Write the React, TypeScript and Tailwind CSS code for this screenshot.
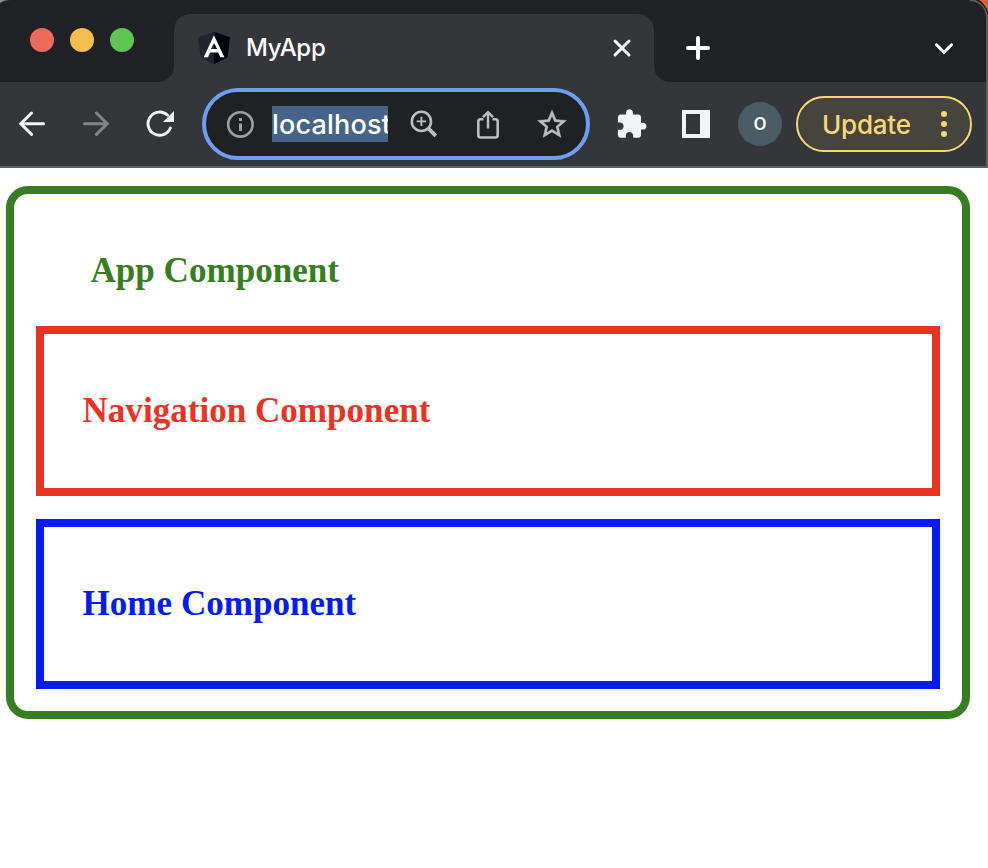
import type { ReactNode } from "react";

function Glyph({ box, className, children }: { box: string; className: string; children: ReactNode }) {
  return (
    <svg viewBox={box} className={`block shrink-0 ${className}`} fill="none">
      {children}
    </svg>
  );
}

function AngularLogo() {
  return (
    <Glyph box="198 31 32 34" className="h-[34px] w-8">
      <path d="M214 31.8 198.2 37.2 200.6 57.5 214 64.3z" fill="#20242f" />
      <path d="M214 31.8 230 37.2 227.6 57.5 214 64.3z" fill="#03060f" />
      <path
        fillRule="evenodd"
        d="M214 35.3 203.7 57.2H208L210.1 52.4H218.2L220.3 57.2H224.4zM214 42.9 217.2 49H210.9z"
        fill="#fff"
      />
    </Glyph>
  );
}

function TabStrip() {
  return (
    <div className="relative flex h-[82px] shrink-0 items-end bg-[#202124]">
      <div className="flex h-[82px] w-[174px] items-start gap-4 pt-7 pl-[30px]">
        <span className="size-6 rounded-full bg-[#ed6a5e]" />
        <span className="size-6 rounded-full bg-[#f5bf4f]" />
        <span className="size-6 rounded-full bg-[#61c554]" />
      </div>
      <div className="relative flex h-[68px] w-[480px] items-center rounded-t-2xl bg-[#35363a] pr-[18px] pl-6">
        <AngularLogo />
        <span className="ml-4 flex-1 font-['Inter','Liberation_Sans',sans-serif] text-[24px] leading-8 font-[450] tracking-[-0.3px] text-white">
          MyApp
        </span>
        <Glyph box="608 34 28 28" className="size-7">
          <path d="M615 41 629 55M629 41 615 55" stroke="#fff" strokeWidth="3" strokeLinecap="round" />
        </Glyph>
        <Glyph box="0 0 16 16" className="absolute bottom-0 -left-4 size-4">
          <path d="M16 0V16H0A16 16 0 0 0 16 0" fill="#35363a" />
        </Glyph>
        <Glyph box="0 0 16 16" className="absolute -right-4 bottom-0 size-4">
          <path d="M0 0V16H16A16 16 0 0 1 0 0" fill="#35363a" />
        </Glyph>
      </div>
      <Glyph box="654 14 88 68" className="h-[68px] w-[88px]">
        <path d="M688 48H708M698 38V58" stroke="#fff" strokeWidth="4" strokeLinecap="round" />
      </Glyph>
      <Glyph box="900 14 88 68" className="ml-auto h-[68px] w-[88px]">
        <path d="M936.5 44.8 944 52.3 951.5 44.8" stroke="#fff" strokeWidth="3" strokeLinecap="round" />
      </Glyph>
      <Glyph box="964 0 24 82" className="absolute top-0 right-0 h-[82px] w-6">
        <path d="M970 0C981 1 987 8 987 19V82" stroke="#5d5e62" strokeWidth="2" />
        <path d="M976 0H988V15C986 8 982 3 976 0" fill="#1b1512" />
        <path d="M979 0H988V11.5C986 6.5 983 3 979 0" fill="#d9622f" />
      </Glyph>
      <Glyph box="0 0 12 4" className="absolute top-0 left-0 h-1 w-3">
        <path d="M0 0H10Q4 0 0 3z" fill="#8c8d90" />
      </Glyph>
    </div>
  );
}

function AddressBar() {
  return (
    <div className="ml-2.5 flex h-[72px] w-[388px] shrink-0 items-center rounded-full border-4 border-[#6f9df1] bg-[#202124]">
      <Glyph box="206 92 66 64" className="h-16 w-[66px]">
        <circle cx="240.4" cy="124.4" r="12.2" stroke="#9aa0a6" strokeWidth="2.6" />
        <path d="M239 118H242V121H239zM239 123.5H242V131H239z" fill="#9aa0a6" />
      </Glyph>
      <div className="h-9 w-[116px] overflow-hidden bg-[#466489] font-['Inter','Liberation_Sans',sans-serif] text-[27px] leading-[38px] font-[450] tracking-[0.2px] whitespace-nowrap text-white">
        localhost
      </div>
      <Glyph box="392 92 64 64" className="ml-1 size-16">
        <circle cx="421.4" cy="121.4" r="9.6" stroke="#bdbdbd" strokeWidth="2.6" />
        <path d="M416.7 121.4H426.1M421.4 116.7V126.1" stroke="#bdbdbd" strokeWidth="1.9" />
        <path d="M428.4 128.4 435.8 135.8" stroke="#bdbdbd" strokeWidth="3.8" />
      </Glyph>
      <Glyph box="456 92 64 64" className="size-16">
        <path
          d="M483.5 119.3H480.5Q478.3 119.3 478.3 121.5V135Q478.3 137.5 480.8 137.5H495.2Q497.7 137.5 497.7 135V121.5Q497.7 119.3 495.5 119.3H492.5"
          stroke="#bdbdbd"
          strokeWidth="2.6"
        />
        <path d="M488 128.5V113M483 117.2 488 112.2 493 117.2" stroke="#bdbdbd" strokeWidth="2.5" />
      </Glyph>
      <Glyph box="520 92 60 64" className="h-16 w-[60px]">
        <path
          transform="translate(534.6 107) scale(1.45)"
          fill="#bdbdbd"
          stroke="#bdbdbd"
          strokeWidth="0.25"
          d="M22 9.24l-7.19-.62L12 2 9.19 8.63 2 9.24l5.46 4.73L5.82 21 12 17.27 18.18 21l-1.63-7.03L22 9.24zM12 15.4l-3.76 2.27 1-4.28-3.32-2.88 4.38-.38L12 6.1l1.71 4.04 4.38.38-3.32 2.88 1 4.28L12 15.4z"
        />
      </Glyph>
    </div>
  );
}

function Toolbar() {
  return (
    <div className="flex h-[86px] shrink-0 items-center border-b-2 border-[#5f6063] bg-[#35363a]">
      <Glyph box="0 92 64 64" className="size-16">
        <path
          d="M43.5 123.8H20.8M31.6 113 20.8 123.8 31.6 134.4"
          stroke="#f1f3f4"
          strokeWidth="3"
          strokeLinecap="round"
        />
      </Glyph>
      <Glyph box="64 92 64 64" className="size-16">
        <path
          d="M84.5 123.8H107.2M96.4 113 107.2 123.8 96.4 134.4"
          stroke="#828387"
          strokeWidth="3"
          strokeLinecap="round"
        />
      </Glyph>
      <Glyph box="128 92 64 64" className="size-16">
        <path
          d="M170.4 128A11.6 11.6 0 1 1 167.6 115.2"
          stroke="#f1f3f4"
          strokeWidth="2.9"
          strokeLinecap="round"
        />
        <path d="M174 111V122H163z" fill="#f1f3f4" />
      </Glyph>
      <AddressBar />
      <Glyph box="600 92 64 64" className="ml-2.5 size-16">
        <path
          transform="translate(615.2 107.8) scale(1.36)"
          fill="#f1f3f4"
          d="M20.5 11H19V7c0-1.1-.9-2-2-2h-4V3.5C13 2.12 11.88 1 10.5 1S8 2.12 8 3.5V5H4c-1.1 0-1.99.9-1.99 2v3.8H3.5c1.49 0 2.7 1.21 2.7 2.7s-1.21 2.7-2.7 2.7H2V20c0 1.1.9 2 2 2h3.8v-1.5c0-1.49 1.21-2.7 2.7-2.7 1.49 0 2.7 1.21 2.7 2.7V22H17c1.1 0 2-.9 2-2v-4h1.5c1.38 0 2.5-1.12 2.5-2.5S21.88 11 20.5 11z"
        />
      </Glyph>
      <Glyph box="664 92 64 64" className="size-16">
        <path fillRule="evenodd" d="M682 110H710V138H682zM686 114V134H700V114z" fill="#f1f3f4" />
      </Glyph>
      <div className="ml-2.5 flex size-11 shrink-0 items-center justify-center rounded-full bg-[#495b65] font-['Roboto',sans-serif] text-[19px] leading-6 font-medium text-white">
        O
      </div>
      <div className="ml-3.5 flex h-14 w-44 shrink-0 items-center rounded-full border-2 border-[#f8d775] bg-[#46443d] pl-6">
        <span className="w-[110px] pt-0.5 font-['Inter','Liberation_Sans',sans-serif] text-[26px] leading-8 font-medium tracking-[-0.2px] text-[#f8d775]">
          Update
        </span>
        <div className="ml-[9px] flex flex-col gap-1">
          <span className="size-1.5 rounded-full bg-[#f8d775]" />
          <span className="size-1.5 rounded-full bg-[#f8d775]" />
          <span className="size-1.5 rounded-full bg-[#f8d775]" />
        </div>
      </div>
      <div className="ml-auto h-[84px] w-0.5 bg-[#5d5e62]" />
    </div>
  );
}

export default function App() {
  return (
    <div className="flex h-[868px] w-[988px] flex-col overflow-hidden bg-white">
      <TabStrip />
      <Toolbar />
      <main className="mt-[18px] ml-1.5 h-[533px] w-[964px] rounded-[22px] border-8 border-[#377e22] px-[22px] pt-14 font-['Liberation_Serif',serif] text-[35.1px] leading-[41px] font-bold">
        <h1 className="ml-[54.5px] text-[#377e22]">App Component</h1>
        <section className="mt-[35px] h-[170px] border-8 border-[#eb3323] pt-14 pl-[38.5px] text-[#eb3323]">
          <h2>Navigation Component</h2>
        </section>
        <section className="mt-[23px] h-[170px] border-8 border-[#001cf5] pt-14 pl-[38.5px] text-[#001cf5]">
          <h2>Home Component</h2>
        </section>
      </main>
    </div>
  );
}
